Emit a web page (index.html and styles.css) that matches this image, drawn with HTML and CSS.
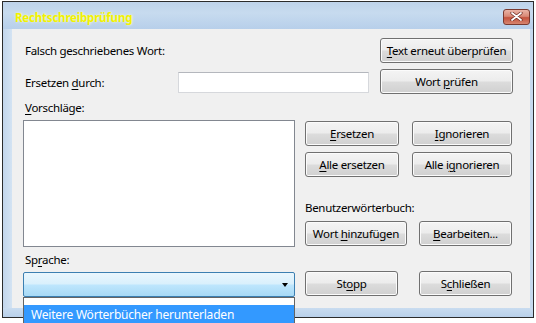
FILE: index.html
```html
<!DOCTYPE html>
<html lang="de">
<head>
<meta charset="utf-8">
<title>Rechtschreibprüfung</title>
<link rel="stylesheet" href="styles.css">
</head>
<body>
<div class="window">
  <div class="titlebar">
    <span class="title">Rechtschreibprüfung</span>
    <span class="close" aria-label="Schließen">
      <svg width="13" height="9" viewBox="0 0 13 9">
        <path d="M2 1 L11 8 M11 1 L2 8" stroke="#6b2a20" stroke-width="3.2" stroke-linecap="round"/>
        <path d="M2 1 L11 8 M11 1 L2 8" stroke="#ffffff" stroke-width="1.8" stroke-linecap="round"/>
      </svg>
    </span>
  </div>
  <div class="body">
    <div class="leftframe"></div>
    <div class="client">
      <div class="row1">
        <span class="label">Falsch geschriebenes Wort:</span>
        <button class="btn wide"><u>T</u>ext erneut überprüfen</button>
      </div>
      <div class="row2">
        <span class="label lbl-fixed">Ersetzen <u>d</u>urch:</span>
        <span class="textbox"></span>
        <button class="btn wide">Wort <u>p</u>rüfen</button>
      </div>
      <div class="label vorschlag"><u>V</u>orschläge:</div>
      <div class="main">
        <div class="listbox"></div>
        <div class="rightcol">
          <div class="btnrow">
            <button class="btn w94"><u>E</u>rsetzen</button>
            <button class="btn w100"><u>I</u>gnorieren</button>
          </div>
          <div class="btnrow second">
            <button class="btn w94"><u>A</u>lle ersetzen</button>
            <button class="btn w100">Alle i<u>g</u>norieren</button>
          </div>
          <div class="label dict">Benutzerwörterbuch:</div>
          <div class="btnrow dictrow">
            <button class="btn w102">Wort <u>h</u>inzufügen</button>
            <button class="btn w93"><u>B</u>earbeiten...</button>
          </div>
        </div>
      </div>
      <div class="bottom">
        <div class="langcol">
          <div class="label sprache">Sp<u>r</u>ache:</div>
          <div class="combo">
            <span class="arrow"></span>
            <div class="dropdown">
              <div class="item">Weitere Wörterbücher herunterladen</div>
            </div>
          </div>
        </div>
        <div class="btnrow endrow">
          <button class="btn w93">St<u>o</u>pp</button>
          <button class="btn w93">S<u>c</u>hließen</button>
        </div>
      </div>
    </div>
    <div class="rightframe"></div>
  </div>
  <div class="bottomframe"></div>
</div>
</body>
</html>
```

FILE: styles.css
```css
html, body {
  margin: 0;
  padding: 0;
  overflow: hidden;
  background: #ffffff;
}
body {
  width: 536px;
  height: 323px;
  font-family: "Noto Sans", "Open Sans", sans-serif;
  font-size: 11.5px;
  letter-spacing: -0.3px;
  color: #000;
}
.window {
  margin: 1px 0 0 2px;
  width: 530px;
  height: 315px;
  border: 1px solid #2b2b2b;
  background: #c6d9ee;
  display: flex;
  flex-direction: column;
}
.titlebar {
  height: 27px;
  flex: none;
  display: flex;
  align-items: center;
  justify-content: space-between;
  background: linear-gradient(to bottom, #bed3ea 0%, #c7dbef 40%, #b7cfea 100%);
  padding: 0 3px 0 12px;
}
.title {
  color: #f2f200;
  font-weight: bold;
  font-size: 11.5px;
  letter-spacing: -0.2px;
  text-shadow: 0 0 3px rgba(255, 255, 210, 0.9);
  margin-top: 3px;
}
.close {
  width: 25px;
  height: 14px;
  border: 1px solid #7a3a30;
  border-radius: 3px;
  background: linear-gradient(to bottom, #eab4a6 0%, #d98a77 45%, #c4533e 55%, #d7856f 100%);
  display: flex;
  align-items: center;
  justify-content: center;
  margin-top: 2px;
}
.close svg { display: block; }
.body {
  flex: 1;
  display: flex;
}
.leftframe {
  width: 9px;
  flex: none;
  background: linear-gradient(to right, #c3d6ec, #d3e3f3);
}
.rightframe {
  width: 3px;
  flex: none;
  background: #c6d9ee;
}
.bottomframe {
  height: 9px;
  flex: none;
  background: linear-gradient(to bottom, #c9dcf0, #b9d0ea);
}
.client {
  flex: 1;
  background: #f0f0f0;
  padding: 0 17px 0 11px;
}
.label {
  line-height: 16px;
  white-space: nowrap;
  padding-left: 2px;
}
u { text-decoration-thickness: 1px; text-underline-offset: 2px; }
.btn {
  font-family: inherit;
  font-size: 11.5px;
  letter-spacing: -0.3px;
  color: #000;
  height: 25px;
  padding: 0;
  border: 1px solid #707070;
  border-radius: 3px;
  background: linear-gradient(to bottom, #f4f4f4 0%, #ececec 48%, #dcdcdc 52%, #d0d0d0 100%);
  box-shadow: inset 0 0 0 1px #fbfbfb;
  white-space: nowrap;
  flex: none;
}
.wide { width: 133px; }
.w94 { width: 94px; }
.w100 { width: 100px; }
.w102 { width: 102px; }
.w93 { width: 93px; }
.row1 {
  margin-top: 9px;
  display: flex;
  align-items: center;
  justify-content: space-between;
}
.row2 {
  margin-top: 6px;
  display: flex;
  align-items: flex-start;
}
.row2 .lbl-fixed {
  width: 153px;
  margin-top: 6px;
}
.textbox {
  width: 189px;
  height: 19px;
  margin-top: 3px;
  background: #fff;
  border: 1px solid #d6d8dc;
  border-top-color: #b4b7bd;
}
.row2 .btn { margin-left: 11px; }
.vorschlag { margin-top: 6px; }
.main {
  margin-top: 4px;
  display: flex;
  gap: 10px;
}
.listbox {
  width: 270px;
  height: 125px;
  background: #fff;
  border: 1px solid #828790;
}
.rightcol {
  padding-top: 1px;
}
.btnrow {
  display: flex;
  gap: 13px;
}
.second { margin-top: 6px; }
.dict { margin-top: 23px; padding-left: 0; }
.dictrow { margin-top: 5px; gap: 12px; }
.bottom {
  display: flex;
  gap: 10px;
}
.langcol { width: 272px; }
.sprache { margin-top: 5px; }
.combo {
  margin-top: 4px;
  height: 23px;
  border: 1px solid #3c7fb1;
  border-radius: 2px;
  background: linear-gradient(to bottom, #eaf6fd 0%, #d9f0fc 48%, #bee6fd 52%, #a7d9f5 100%);
  position: relative;
}
.arrow {
  position: absolute;
  right: 6px;
  top: 10px;
  width: 0;
  height: 0;
  border-left: 3.5px solid transparent;
  border-right: 3.5px solid transparent;
  border-top: 4px solid #000;
}
.dropdown {
  position: absolute;
  left: -1px;
  top: 24px;
  width: 270px;
  height: 18px;
  border: 1px solid #646464;
  border-bottom: none;
  background: #fff;
  padding-top: 7px;
  overflow: hidden;
}
.item {
  background: #3399ff;
  color: #fff;
  height: 18px;
  line-height: 16px;
  padding-top: 2px;
  padding-left: 7px;
  white-space: nowrap;
  font-size: 12px;
  letter-spacing: -0.2px;
}
.endrow {
  margin-top: 24px;
  gap: 21px;
}
```
